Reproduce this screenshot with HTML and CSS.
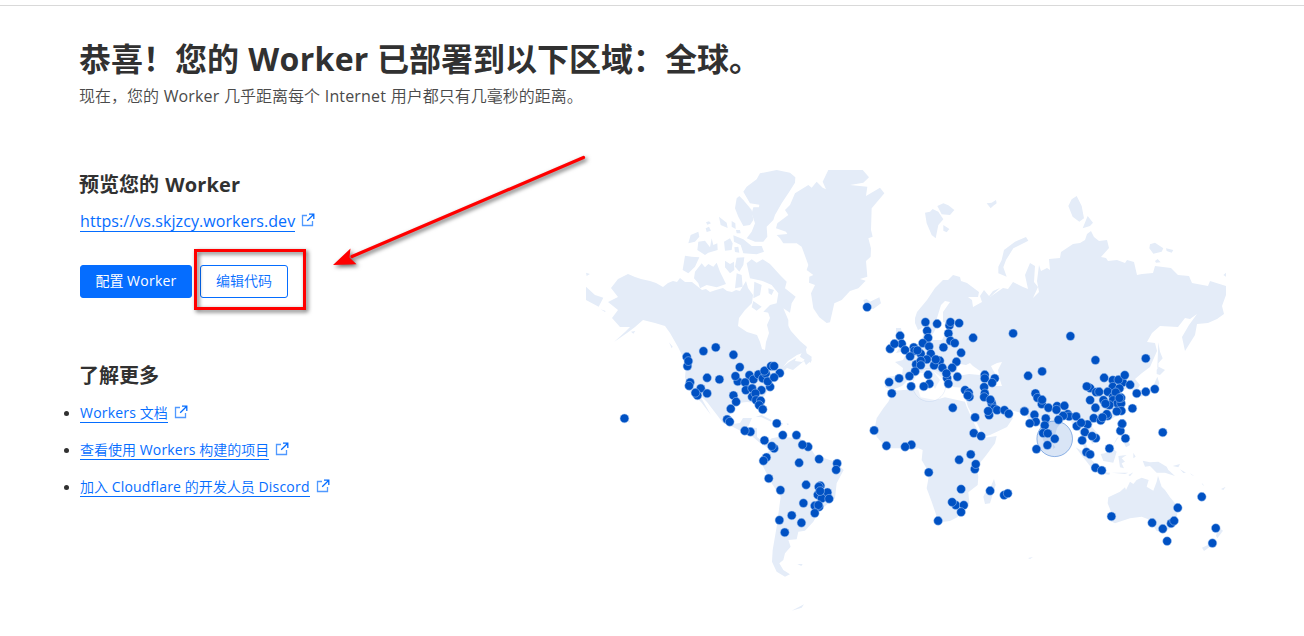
FILE: index.html
```html
<!DOCTYPE html>
<html lang="zh-CN">
<head>
<meta charset="utf-8">
<title>Worker</title>
<link rel="stylesheet" href="styles.css">
</head>
<body>
<svg class="sprite" aria-hidden="true">
  <symbol id="external" viewBox="0 0 14 14">
    <path d="M6 2.500H1.500V12.500H11.500V8" fill="none" stroke="currentColor" stroke-width="1.300" opacity=".7"/>
    <path d="M8 1.200H12.800V6M12.800 1.200L6.200 7.800" fill="none" stroke="currentColor" stroke-width="1.300"/>
  </symbol>
</svg>
<main class="page">
  <header class="intro">
    <h1 class="title">恭喜！您的 <span class="lat">Worker</span> 已部署到以下区域：全球。</h1>
    <p class="lead">现在，您的 <span class="lat">Worker</span> 几乎距离每个 <span class="lat">Internet</span> 用户都只有几毫秒的距离。</p>
  </header>
  <div class="columns">
    <div class="side">
      <section class="preview">
        <h2 class="subtitle">预览您的 <span class="lat">Worker</span></h2>
        <div class="url"><a class="link url-link">https://vs.skjzcy.workers.dev</a><svg class="ext"><use href="#external"/></svg></div>
        <div class="actions">
          <button class="btn primary">配置 <span class="lat">Worker</span></button>
          <button class="btn outline">编辑代码</button>
        </div>
      </section>
      <section class="more">
        <h2 class="subtitle">了解更多</h2>
        <ul class="links">
          <li><a class="link"><span class="lat">Workers</span> 文档</a><svg class="ext"><use href="#external"/></svg></li>
          <li><a class="link">查看使用 <span class="lat">Workers</span> 构建的项目</a><svg class="ext"><use href="#external"/></svg></li>
          <li><a class="link">加入 <span class="lat">Cloudflare</span> 的开发人员 <span class="lat">Discord</span></a><svg class="ext"><use href="#external"/></svg></li>
        </ul>
      </section>
    </div>
    <svg class="map" viewBox="586 170 640 450">
      <g class="land">
        <!-- North America -->
        <path d="M628 274L635 277 641 279 650 281 656 283 663 287 668 283 673 281 677 282 680 278 685 282 692 282 697 286 702 290 706 289 710 292 716 290 723 288 727 291 732 292 736 290 740 291 743 286 746 281 748 288 753 295 752 303 745 310 739 318 738 326 747 332 757 335 760 342 762 349 765 350 766 342 769 333 767 325 770 318 768 312 778 310 783 316 791 331 800 341 807 347 805 352 797 355 788 361 783 367 789 362 796 358 795 361 802 362 808 357 812 360 806 365 804 361 793 370 787 368 780 375 773 382 768 390 763 398 766 409 762 411 757 403 747 402 738 403 732 408 729 418 733 424 740 423 743 418 752 418 748 427 757 428 757 437 763 442 768 441 773 446 768 448 760 443 753 437 743 432 733 427 723 423 717 415 707 402 699 394 711 415 701 402 693 395 687 388 685 377 686 367 682 355 678 347 670 333 665 326 655 323 643 320 635 327 627 333 614 342 625 332 630 327 620 327 612 318 618 310 608 302 618 297 611 288 618 279Z"/>
        <g transform="translate(570 160) scale(.33333)">
          <path d="M570 40L620 30 660 38 676 52 675 68 655 100 635 130 615 165 610 180 590 200 592 230 580 245 555 245 530 235 545 215 555 190 545 160 550 142 567 142 568 134 540 130 520 95 530 80 560 58Z"/>
          <path d="M508 108L520 120 545 150 550 180 540 195 520 198 505 170 495 145 500 115ZM490 226L520 238 545 258 575 258 582 275 560 283 520 280 512 255 492 245Z"/>
          <path d="M530 310L545 298 560 308 578 298 600 312 630 345 650 365 645 385 677 410 665 430 660 458 640 445 655 480 655 500 640 495 635 485 605 460 580 455 600 435 620 430 625 400 605 375 575 362 540 355Z"/>
          <path d="M550 423L575 440 560 452 545 442ZM375 335L395 310 405 322 415 312 430 320 440 308 450 335 468 372 440 382 410 375 390 385 385 370 372 355ZM345 287L365 290 388 292 375 320 355 340 338 330ZM382 270L385 245 405 242 420 262 425 235 430 255 442 250 443 270 415 278 405 285ZM355 250L362 225 385 215 388 230 375 245ZM447 170L470 188 473 204 452 195ZM485 183L496 190 497 207 485 200ZM407 205L417 200 423 212 410 216ZM408 187L417 184 423 190 412 194ZM462 245L480 235 488 250 485 270 465 272ZM493 262L505 260 508 278 495 276ZM465 302L480 312 492 305 493 330 480 340 465 322ZM500 293L523 292 520 315 508 335 495 320ZM500 340L515 345 518 380 495 385ZM553 365L575 375 570 405 550 415ZM48 380L75 405 100 413 86 440 48 420ZM48 338L60 342 50 348ZM498 210L510 210 512 220 500 220ZM595 385L612 390 605 405 596 400ZM297 547L308 560 305 565ZM92 448L107 453 105 456ZM183 515L196 513 190 521Z"/>
        </g>
        <!-- Greenland, Iceland, Svalbard -->
        <g transform="translate(780 160) scale(.33333)">
          <path d="M145 30L248 30 267 52 250 68 210 75 262 80 258 108 300 83 313 100 275 145 273 210 278 230 265 235 273 265 272 290 258 303 262 350 240 357 257 362 235 385 210 393 185 420 163 430 150 487 140 489 118 472 100 445 93 400 105 375 87 368 88 350 100 345 80 330 85 315 65 260 50 250 10 250 0 235-10 225 22 222 18 215-12 205-8 190 25 165 15 150 30 135 45 100 85 75 95 83 110 65 128 83 138 88 128 65Z"/>
          <path d="M250 420L260 417 270 425 298 412 303 430 280 447 255 440ZM435 158L450 155 458 147 475 155 490 178 475 195 467 235 455 225 440 190ZM472 138L490 130 505 136 523 150 510 165 485 163ZM490 195L508 207 500 217 490 212ZM620 130L635 128 648 120 650 130 640 137 632 145Z"/>
          <path d="M60 590L75 555 80 580 95 590 93 608 75 600Z"/>
        </g>
        <!-- Eurasia -->
        <path d="M915 318L917 312 927 300 935 288 943 280 948 280 953 275 960 277 961 281 967 283 979 292 978 297 968 297 972 300 973 307 982 302 980 296 984 290 989 296 993 291 1000 288 990 297 1003 288 1008 289 1013 282 1023 287 1028 289 1025 275 1030 263 1035 266 1034 282 1038 287 1033 298 1039 292 1037 281 1039 265 1041 271 1047 268 1050 270 1049 259 1060 258 1061 252 1073 244 1080 243 1085 240 1087 234 1091 231 1094 237 1099 241 1107 240 1109 248 1101 257 1106 258 1108 261 1117 260 1125 263 1127 260 1134 262 1137 275 1142 274 1153 273 1155 266 1171 268 1178 275 1189 276 1192 283 1208 286 1210 281 1226 286V295L1222 306 1224 314 1217 319 1208 323 1197 324 1195 335 1190 343 1185 351 1182 337 1189 325 1197 314 1190 319 1185 318 1178 327 1160 326 1152 333 1147 342 1155 343 1157 351 1150 367 1142 373 1135 379 1140 385 1137 390 1132 390 1128 382 1122 384 1128 388 1121 391 1124 403 1121 413 1110 420 1100 423 1093 422 1092 427 1099 435 1098 441 1092 444 1090 438 1084 438 1088 449 1092 457 1087 453 1083 445 1081 435 1077 428 1073 429 1071 420 1065 418 1057 428 1053 443 1048 448 1043 440 1039 423 1030 422 1026 414 1014 411 1001 410 992 402 990 405 997 413 1007 412 1013 418 1007 427 990 435 983 437 978 425 968 407 966 400 967 392 965 388 953 387 950 381 956 377 953 375 950 387 945 388 942 378 933 371 940 380 937 385 935 389 931 381 924 373 915 373 908 380 902 386 892 390 885 387 886 377 902 375 903 368 895 362 903 360 905 356 913 350 922 342 923 334 927 333 929 340 942 340 947 330 953 324 943 322 943 312 950 302 945 301 941 305 937 318 938 324 934 332 930 338 924 327 918 330 915 323Z"/>
        <path d="M896 328L901 328 902 334 904 340 908 348 901 352 896 353 900 347 896 339ZM890 343L895 341 895 349 889 351Z"/>
        <g transform="translate(990 180) scale(.33333)">
          <path d="M108 171L115 182 70 205 48 240 40 262 50 290 25 280 25 260 35 240 42 210 75 185ZM245 58L260 48 275 78 282 115 268 125 248 110 235 78ZM293 108L309 128 300 138 278 145ZM480 193L495 188 520 205 515 215 490 221 478 205ZM528 205L550 210 545 218 530 213ZM495 243L503 237 512 247 498 248ZM700 285L708 278V290ZM505 487L510 515 518 535 505 550 506 578 502 560 504 515Z"/>
        </g>
        <!-- Japan, Philippines -->
        <g transform="translate(1000 350) scale(.33333)">
          <path d="M470 60L476 50 495 60 480 75 470 72ZM472 80L478 100 470 120 440 128 425 140 415 135 440 120 460 108ZM358 210L368 215 365 240 378 250 370 252 358 235ZM370 275L385 270 390 285 378 292ZM350 265L358 258 340 285ZM158 280L166 292 160 297Z"/>
        </g>
        <!-- Africa -->
        <path transform="translate(850 310) scale(.33333)" d="M130 243L190 237 205 240 212 262 255 270 285 262 345 275 350 290 370 335 395 385 440 378 435 400 405 440 380 470 385 500 383 525 355 547 358 580 335 605 322 622 300 633 270 637 262 625 245 575 230 535 238 490 215 450 218 420 205 415 190 418 150 415 110 415 80 380 75 350 80 325 100 295 115 275ZM432 507L437 525 420 580 405 582 400 560 405 550 418 540Z"/>
        <!-- South America, Caribbean -->
        <path transform="translate(600 340) scale(.33333)" d="M500 310L515 295 540 290 600 295 625 315 645 345 705 365 731 390 710 430 705 475 660 510 640 545 615 572 595 575 590 598 565 600 572 620 555 640 550 660 538 670 550 690 570 703 555 710 530 695 516 665 518 630 530 560 542 470 515 430 487 375 495 345 510 330ZM467 230L485 225 515 240 513 245 485 232ZM525 250L550 250 545 258ZM560 250L568 252 562 256ZM592 672L608 672 604 678ZM575 812L612 793 605 803ZM84 241L91 245 86 248Z"/>
        <!-- Oceania -->
        <path transform="translate(1050 440) scale(.33333)" d="M175 172L210 155 225 142 228 150 240 125 250 132 260 120 275 113 296 120 290 140 310 152 320 125 324 107 335 140 345 150 360 172 375 190 382 225 365 262 340 278 320 273 305 250 295 255 295 238 275 230 240 235 195 250 180 242 183 215 173 190ZM278 62L300 67 325 65 350 80 355 90 375 108 345 98 320 98 300 78 285 80ZM152 42L165 40 185 22 200 35 190 68 160 63ZM77 22L100 35 135 70 135 85 122 80 98 50ZM135 93L160 97 180 98 178 104 145 100ZM205 48L230 45 215 55 225 65 215 70 222 85 210 82ZM185 98L235 98 225 102ZM235 105L250 97 240 109ZM250 38L257 50 250 55ZM368 78L390 72 385 82ZM390 88L408 98 400 99ZM420 100L433 108 425 105ZM455 128L463 137 458 135ZM513 147L527 140 520 150ZM505 262L519 272 502 295 498 287ZM497 300L478 322 462 333 456 323 480 312ZM343 292L355 292 350 300Z"/>
        <path d="M1028 558L1033 557 1030 559Z"/>
      </g>
      <g class="water">
        <path d="M957 368L960 364 966 365 970 363 973 366 983 373 980 375 969 374 958 376ZM991 366L997 363 1002 362 998 370 1000 380 1002 386 996 386 994 379 996 375 993 370ZM920 382L924 381 924 378 920 379Z"/>
      </g>
      <circle class="ripple-faint" cx="929.3" cy="385" r="16.5"/>
      <circle class="ripple" cx="1054.7" cy="438.8" r="17.8"/>
      <g id="pins" class="pins"></g>
    </svg>
  </div>
</main>
<div class="highlight"></div>
<svg class="arrow" viewBox="0 0 270 130">
  <path d="M258.500 5.500L27 104.500" stroke="#f00" stroke-width="3.200" stroke-linecap="round"/>
  <path d="M8 113L25.500 96.500 24.500 105.500 31.500 112.200Z" fill="#f00"/>
</svg>
<script src="pins.js"></script>
</body>
</html>
```
FILE: styles.css
```css
* { box-sizing: border-box; }
body {
  margin: 0;
  height: 636px;
  overflow: hidden;
  position: relative;
  background: #fff;
  color: #313131;
  font-family: "Open Sans", "Noto Sans CJK SC", sans-serif;
}
.sprite { position: absolute; width: 0; height: 0; }
.page {
  margin-top: 5px;
  border-top: 1px solid #d9d9d9;
  padding: 33px 78px 0 79px;
}
h1, h2, p, ul { margin: 0; padding: 0; }
.title { font-size: 32px; line-height: 40px; font-weight: 700; white-space: nowrap; }
.title .lat { margin-left: 1px; letter-spacing: .3px; }
.lead { margin-top: 5px; font-size: 16px; line-height: 24px; color: #4a4a4a; font-weight: 350; word-spacing: .5px; }
.lead .lat { font-weight: 400; letter-spacing: .15px; }
.columns { display: flex; justify-content: space-between; margin-top: 61px; }
.side { flex: none; width: 400px; padding-left: 1px; }
.subtitle { margin-left: -1px; font-size: 20px; line-height: 31px; font-weight: 700; }
.subtitle .lat { margin-left: 1px; letter-spacing: .15px; }
.map { flex: none; width: 640px; height: 450px; margin-top: 1px; }
.link { display: inline-block; color: #056dff; border-bottom: 1px solid #056dff; white-space: nowrap; }
.ext { width: 14px; height: 14px; color: #056dff; flex: none; margin-left: 6px; }
.url { display: flex; height: 22px; margin-top: 10px; font-size: 16px; line-height: 22px; align-items: flex-start; }
.url-link { height: 22px; letter-spacing: .08px; }
.url .ext { margin-top: 3px; }
.actions { display: flex; gap: 8px; margin-top: 33px; }
.btn {
  height: 33px;
  padding: 0;
  border: 1px solid #056dff;
  border-radius: 3px;
  font: 14px/30px "Open Sans", "Noto Sans CJK SC", sans-serif;
  font-weight: 350;
  white-space: nowrap;
}
.btn::after { content: ""; display: block; height: 1px; }
.btn .lat { font-weight: 400; letter-spacing: .25px; }
.primary { width: 112px; background: #056dff; color: #fff; font-weight: 400; }
.outline { width: 88px; background: #fff; color: #056dff; }
.more { margin-top: 62px; }
.links { list-style: none; margin-top: 12px; }
.links li { display: flex; align-items: flex-start; height: 37px; font-size: 14px; line-height: 19px; position: relative; font-weight: 350; }
.links .link { height: 20px; }
.links .lat { font-weight: 400; letter-spacing: .2px; }
.links li::before {
  content: "";
  position: absolute;
  left: -16px;
  top: 8px;
  width: 5px;
  height: 5px;
  border-radius: 50%;
  background: #313131;
}
.links .ext { margin-top: 2px; }
.land { fill: #e4ecf8; }
.water { fill: #fff; }
.pins circle { fill: #0051c3; stroke: #a9c8f3; stroke-width: .5; }
.ripple { fill: #0051c3; fill-opacity: .15; stroke: #0051c3; stroke-opacity: .45; stroke-width: .9; }
.ripple-faint { fill: #fff; fill-opacity: .35; stroke: #0051c3; stroke-opacity: .1; stroke-width: .8; }
.highlight {
  position: absolute;
  left: 194px;
  top: 249px;
  width: 112px;
  height: 61px;
  border: 3px solid #f00;
  filter: drop-shadow(2px 2px 2px rgba(0, 0, 0, .6));
}
.arrow {
  position: absolute;
  left: 325px;
  top: 152px;
  width: 270px;
  height: 130px;
  filter: drop-shadow(2px 2px 2px rgba(0, 0, 0, .6));
}
```
FILE: pins.js
```js
// Data centre positions, grouped by region; each group has an origin on the map and a 1/3 unit grid.
const regions = [
  { x: 600, y: 340, p: "73,235 310,33 347,22 400,44 260,50 262,78 265,63 419,81 270,127 267,137 321,113 358,118 302,145 292,166 286,158 321,160 413,124 406,108 448,105 460,118 435,127 475,103 488,115 497,100 493,92 513,78 522,78 539,99 510,140 503,124 522,112 437,150 456,145 484,150 456,170 466,160 468,180 482,182 477,195 488,208 400,166 408,185 392,206 381,238 389,245 451,275 434,272 530,250 548,285 589,285 493,301 522,325 515,318 624,320 607,314 499,352 490,362 597,368 657,357 711,370 708,389 506,415 541,450 618,434 661,437 656,440 682,457 653,464 665,475 660,453 687,476 610,489 644,497 657,500 655,495 644,519 575,526 604,548 538,540 554,577" },
  { x: 850, y: 310, p: "51,-9 226,36 261,41 298,46 301,36 327,39 231,62 295,70 369,83 489,70 150,77 234,83 301,92 314,99 120,116 155,101 133,101 218,99 280,112 237,109 191,112 193,122 165,120 212,131 202,121 180,139 242,131 333,128 230,148 269,152 252,166 257,148 198,163 212,152 212,165 319,155 277,173 306,173 195,184 291,204 289,190 322,200 234,194 178,198 147,205 117,216 183,229 238,221 221,229 295,221 125,250 404,194 404,205 434,205 426,218 402,231 345,240 356,248 358,260 353,256 404,250 402,261 425,280 421,269 432,295 417,315 414,303 441,300 463,300 476,311 523,303 308,293 375,322 72,361 109,407 184,404 165,410 371,369 393,378 362,433" },
  { x: 850, y: 430, p: "327,89 374,117 377,102 236,127 333,177 420,182 462,195 473,190 317,225 306,216 341,225 333,246 264,272" },
  { x: 1000, y: 350, p: "211,-42 286,30 437,25 84,77 126,64 312,83 338,90 368,97 355,89 374,75 390,104 338,110 358,115 270,114 260,109 288,126 297,125 323,125 339,140 347,127 410,130 437,125 464,117 106,130 112,143 125,162 126,149 270,150 310,150 339,150 352,160 363,160 363,143 358,144 328,165 316,161 145,173 286,173 171,168 193,167 169,179 73,184 103,194 364,182 350,184 397,175 203,192 207,199 189,197 228,199 323,197 320,192 137,205 175,209 107,215 89,220 281,204 302,211 307,202 366,221 134,226 230,228 262,223 243,218 361,242 366,221 376,265 488,247 129,249 143,250 164,266 142,285 109,297 254,246 246,271 287,264 276,258 328,295 259,306 270,313 286,353 305,361" },
  { x: 1050, y: 440, p: "455,170 383,203 184,229 306,248 338,266 363,250 372,242 351,303 497,264 487,309" }
];
const pins = document.getElementById("pins");
for (const r of regions) {
  for (const pair of r.p.split(" ")) {
    const [x, y] = pair.split(",").map(Number);
    const c = document.createElementNS("http://www.w3.org/2000/svg", "circle");
    c.setAttribute("cx", r.x + x / 3 + 0.1);
    c.setAttribute("cy", r.y + y / 3 + 0.1);
    c.setAttribute("r", 4.4);
    pins.appendChild(c);
  }
}
```
